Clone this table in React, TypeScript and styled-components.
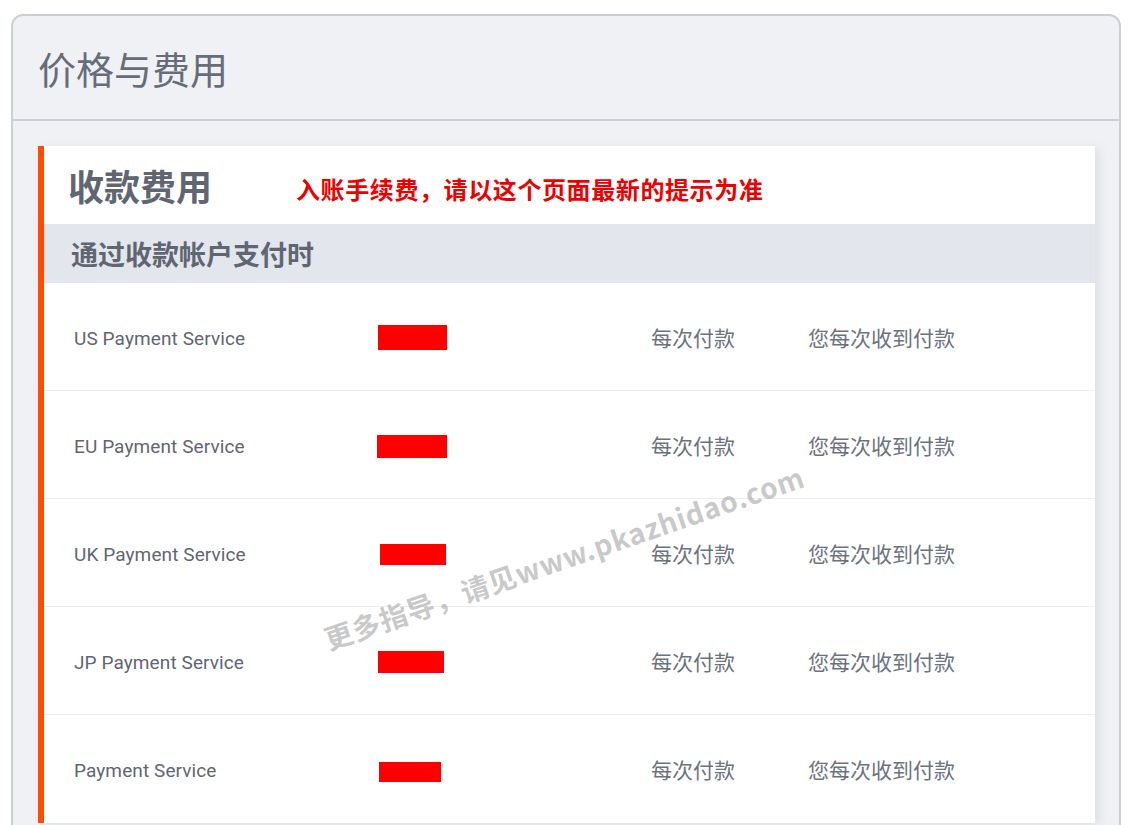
import styled, { createGlobalStyle } from "styled-components";

const GlobalStyle = createGlobalStyle`
  html, body {
    margin: 0;
    padding: 0;
    background: #ffffff;
  }
  body {
    font-family: Roboto, "Noto Sans CJK SC", sans-serif;
  }
`;

type Row = {
  name: string;
  redaction: { w: number; h: number; dx: number; dy: number };
};

const rows: Row[] = [
  { name: "US Payment Service", redaction: { w: 69, h: 25, dx: 0, dy: 2 } },
  { name: "EU Payment Service", redaction: { w: 70, h: 23, dx: -1, dy: 3 } },
  { name: "UK Payment Service", redaction: { w: 66, h: 21, dx: 2, dy: 4 } },
  { name: "JP Payment Service", redaction: { w: 66, h: 22, dx: 0, dy: 3 } },
  { name: "Payment Service", redaction: { w: 62, h: 20, dx: 1, dy: 5 } },
];

export default function App() {
  return (
    <>
      <GlobalStyle />
      <Page>
        <Panel>
          <PanelHeader>
            <PanelTitle>价格与费用</PanelTitle>
          </PanelHeader>
          <PanelBody>
            <FeeCard>
              <CardHead>
                <CardTitle>收款费用</CardTitle>
                <Notice>入账手续费，请以这个页面最新的提示为准</Notice>
              </CardHead>
              <SubHead>通过收款帐户支付时</SubHead>
              {rows.map((row, i) => (
                <FeeRow key={row.name} $last={i === rows.length - 1}>
                  <ServiceName>{row.name}</ServiceName>
                  <RedactCell>
                    <Redaction
                      style={{
                        width: row.redaction.w,
                        height: row.redaction.h,
                        marginLeft: row.redaction.dx,
                        marginTop: row.redaction.dy,
                      }}
                    />
                  </RedactCell>
                  <Cell>每次付款</Cell>
                  <Cell>您每次收到付款</Cell>
                </FeeRow>
              ))}
              <Watermark>更多指导，请见www.pkazhidao.com</Watermark>
            </FeeCard>
          </PanelBody>
        </Panel>
      </Page>
    </>
  );
}

const Page = styled.div`
  padding: 14px 12px 0 11px;
`;

const Panel = styled.section`
  width: 1110px;
  box-sizing: border-box;
  border: 2px solid #cdcfd6;
  border-radius: 12px;
  background: #f0f1f5;
  min-height: 900px;
`;

const PanelHeader = styled.div`
  height: 103px;
  border-bottom: 2px solid #cdcfd6;
  display: flex;
  align-items: center;
  padding-left: 25px;
`;

const PanelTitle = styled.h1`
  margin: 0;
  font-family: "Noto Sans CJK SC", sans-serif;
  font-weight: 400;
  font-size: 38px;
  color: #666d79;
`;

const PanelBody = styled.div`
  padding: 25px 24px 40px 25px;
`;

const FeeCard = styled.div`
  position: relative;
  background: #ffffff;
  border-left: 6px solid #ff4c00;
  box-shadow: 4px 2px 10px rgba(0, 0, 0, 0.08);
  overflow: hidden;
`;

const CardHead = styled.div`
  height: 78px;
  display: flex;
  align-items: center;
  padding-left: 24px;
  gap: 84px;
`;

const CardTitle = styled.h2`
  margin: 0;
  font-family: "Noto Sans CJK SC", sans-serif;
  font-weight: 700;
  font-size: 36px;
  color: #5f6672;
`;

const Notice = styled.span`
  font-family: "Noto Sans CJK SC", sans-serif;
  font-weight: 700;
  font-size: 24px;
  letter-spacing: 0.6px;
  color: #ee0000;
  margin-top: 6px;
`;

const SubHead = styled.div`
  height: 59px;
  background: #e3e6ed;
  display: flex;
  align-items: center;
  padding-left: 27px;
  font-family: "Noto Sans CJK SC", sans-serif;
  font-weight: 700;
  font-size: 27px;
  color: #5f6672;
`;

const FeeRow = styled.div<{ $last: boolean }>`
  height: 108px;
  box-sizing: border-box;
  display: grid;
  grid-template-columns: 304px 273px 157px 1fr;
  align-items: center;
  padding-left: 30px;
  border-bottom: ${(p) => (p.$last ? "none" : "1px solid #ececee")};
`;

const ServiceName = styled.div`
  font-family: Roboto, sans-serif;
  font-size: 19px;
  letter-spacing: 0.1px;
  color: #5f6673;
  padding-top: 3px;
`;

const RedactCell = styled.div`
  display: flex;
  align-items: center;
`;

const Redaction = styled.div`
  background: #ff0000;
`;

const Cell = styled.div`
  font-family: "Noto Sans CJK SC", sans-serif;
  font-size: 21px;
  color: #6b7280;
`;

const Watermark = styled.div`
  position: absolute;
  left: 520px;
  top: 411px;
  transform: translate(-50%, -50%) rotate(-19deg);
  white-space: nowrap;
  font-family: "Noto Sans CJK SC", sans-serif;
  font-weight: 700;
  font-size: 28px;
  color: rgba(165, 165, 165, 0.6);
  letter-spacing: 0.8px;
  pointer-events: none;
`;
